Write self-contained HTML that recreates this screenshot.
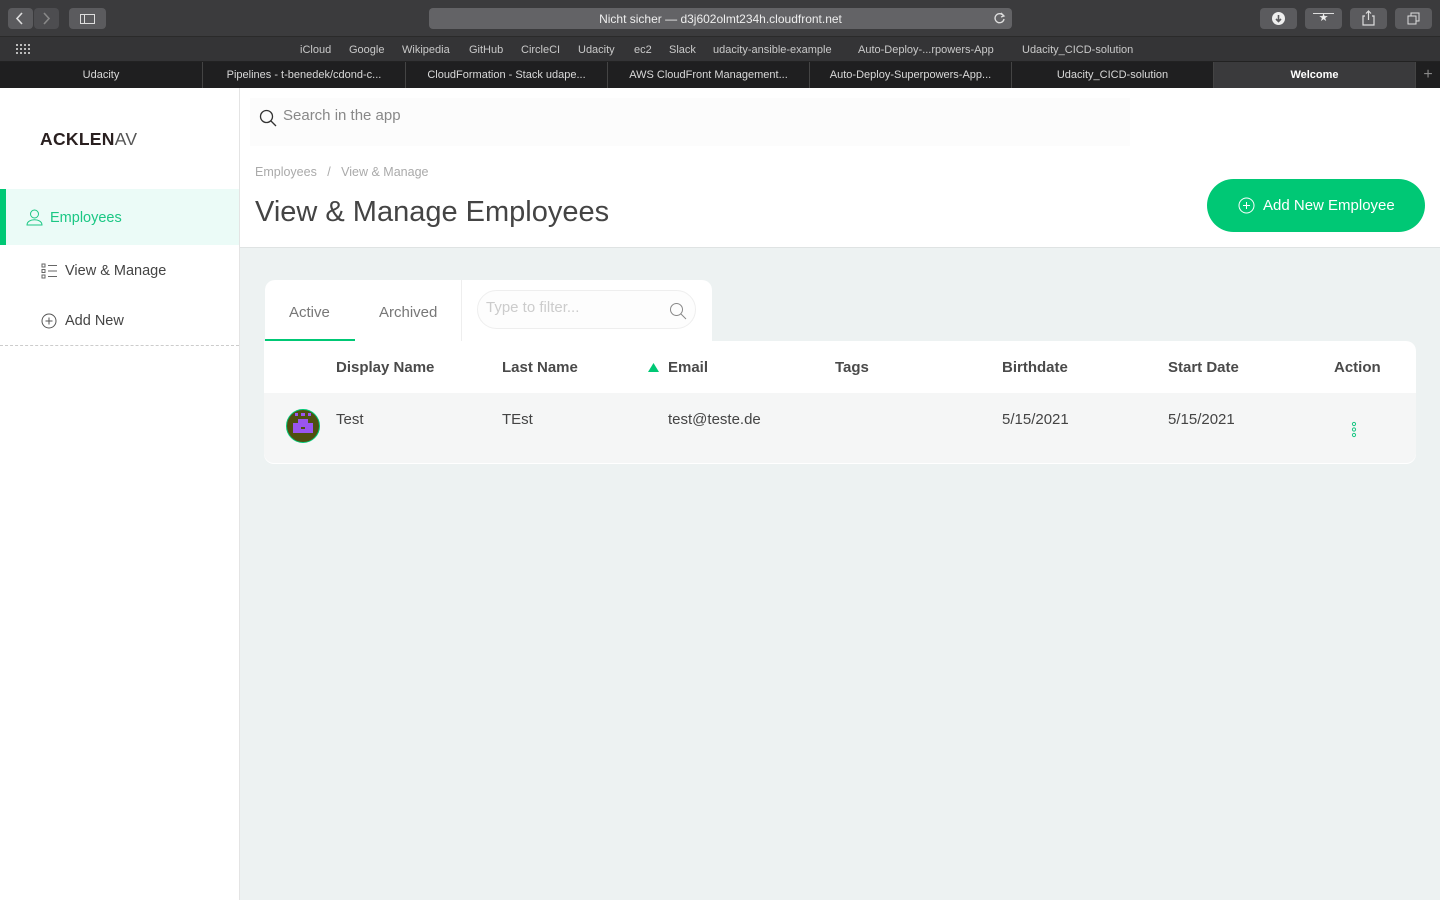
<!DOCTYPE html>
<html><head><meta charset="utf-8"><style>
*{box-sizing:border-box;margin:0;padding:0}
body{width:1440px;height:900px;overflow:hidden;font-family:"Liberation Sans",sans-serif;background:#edf2f2;position:relative}
.abs{position:absolute}
.tb{left:0;top:0;width:1440px;height:37px;background:#3b3b3d;border-bottom:1px solid #2a2a2a}
.btn{background:#5b5b5e;border-radius:4px;height:21px;top:8px}
.bm{left:0;top:37px;width:1440px;height:25px;background:#343436;border-bottom:1px solid #222;color:#c9c9c9;font-size:11px}
.bm span{position:absolute;top:7px}
.tabs{left:0;top:62px;width:1440px;height:26px;background:#1f1f20;color:#d9d9d9;font-size:11px}
.tab{position:absolute;top:0;height:26px;line-height:26px;text-align:center;border-right:1px solid #444;white-space:nowrap;overflow:hidden}
.side{left:0;top:88px;width:240px;height:812px;background:#fff;border-right:1px solid #e4e4e4}
.head{left:240px;top:88px;width:1200px;height:160px;background:#fff;border-bottom:1px solid #dfe3e3}
.f{font-family:"Liberation Sans",sans-serif}
.card{background:#fff}
.th{position:absolute;top:359px;font-weight:bold;font-size:15px;color:#4a4a4a}
.td{position:absolute;top:411px;font-size:15px;color:#444}
</style></head><body>
<div class="abs tb">
 <div class="abs btn" style="left:8px;width:25px"></div>
 <div class="abs btn" style="left:34px;width:25px;background:#4d4d50"></div>
 <svg class="abs" style="left:14px;top:12px" width="12" height="13"><path d="M8 1 L3 6.5 L8 12" stroke="#ddd" stroke-width="1.6" fill="none"/></svg>
 <svg class="abs" style="left:40px;top:12px" width="12" height="13"><path d="M4 1 L9 6.5 L4 12" stroke="#888" stroke-width="1.6" fill="none"/></svg>
 <div class="abs btn" style="left:69px;width:37px"></div>
 <div class="abs" style="left:80px;top:14px;width:15px;height:10px;border:1.3px solid #ddd"></div>
 <div class="abs" style="left:84px;top:14px;width:1px;height:10px;background:#ddd"></div>
 <div class="abs btn" style="left:429px;width:583px;background:#636366;color:#eee;font-size:12px;text-align:center;line-height:22px">Nicht sicher — d3j602olmt234h.cloudfront.net</div>
 <svg class="abs" style="left:993px;top:12px" width="13" height="13"><path d="M10.5 4 A4.5 4.5 0 1 0 11 7" stroke="#ddd" stroke-width="1.4" fill="none"/><path d="M8 1 L11 4 L8 5" stroke="#ddd" stroke-width="1.3" fill="none"/></svg>
 <div class="abs btn" style="left:1260px;width:37px"></div>
 <svg class="abs" style="left:1272px;top:12px" width="13" height="13"><circle cx="6.5" cy="6.5" r="6.5" fill="#eee"/><path d="M6.5 3V9M4 7L6.5 9.5L9 7" stroke="#5b5b5e" stroke-width="1.6" fill="none"/></svg>
 <div class="abs btn" style="left:1305px;width:37px;color:#eee;font-size:11px;text-align:center;line-height:21px">★</div>
 <div class="abs" style="left:1313px;top:13px;width:21px;height:1px;background:#ddd"></div>
 <div class="abs btn" style="left:1350px;width:37px"></div>
 <svg class="abs" style="left:1362px;top:10px" width="13" height="16"><path d="M3 6 H1 V15 H12 V6 H10 M6.5 10 V1 M4 3.5 L6.5 1 L9 3.5" stroke="#ddd" stroke-width="1.2" fill="none"/></svg>
 <div class="abs btn" style="left:1395px;width:37px"></div>
 <svg class="abs" style="left:1407px;top:12px" width="13" height="13"><rect x="1" y="4" width="8" height="8" stroke="#ddd" fill="none"/><path d="M4 4V1H12V9H9" stroke="#ddd" fill="none"/></svg>
</div>
<div class="abs bm">
 <svg class="abs" style="left:16px;top:7px" width="14" height="11" fill="#bbb"><rect x="0" y="0" width="2" height="2"/><rect x="4" y="0" width="2" height="2"/><rect x="8" y="0" width="2" height="2"/><rect x="12" y="0" width="2" height="2"/><rect x="0" y="4" width="2" height="2"/><rect x="4" y="4" width="2" height="2"/><rect x="8" y="4" width="2" height="2"/><rect x="12" y="4" width="2" height="2"/><rect x="0" y="8" width="2" height="2"/><rect x="4" y="8" width="2" height="2"/><rect x="8" y="8" width="2" height="2"/><rect x="12" y="8" width="2" height="2"/></svg>
 <span style="left:300px">iCloud</span><span style="left:349px">Google</span><span style="left:402px">Wikipedia</span><span style="left:469px">GitHub</span><span style="left:521px">CircleCI</span><span style="left:578px">Udacity</span><span style="left:634px">ec2</span><span style="left:669px">Slack</span><span style="left:713px">udacity-ansible-example</span><span style="left:858px">Auto-Deploy-...rpowers-App</span><span style="left:1022px">Udacity_CICD-solution</span>
</div>
<div class="abs tabs">
 <div class="tab" style="left:0;width:203px">Udacity</div>
 <div class="tab" style="left:203px;width:203px">Pipelines - t-benedek/cdond-c...</div>
 <div class="tab" style="left:406px;width:202px">CloudFormation - Stack udape...</div>
 <div class="tab" style="left:608px;width:202px">AWS CloudFront Management...</div>
 <div class="tab" style="left:810px;width:202px">Auto-Deploy-Superpowers-App...</div>
 <div class="tab" style="left:1012px;width:202px">Udacity_CICD-solution</div>
 <div class="tab" style="left:1214px;width:202px;background:#3a3a3c;color:#fff;font-weight:bold">Welcome</div>
 <div class="tab" style="left:1416px;width:24px;border:0;color:#888;font-size:16px">+</div>
</div>
<div class="abs side">
 <div class="abs" style="left:40px;top:41px;font-size:17.5px;font-weight:bold;color:#2a2020;letter-spacing:0.3px">ACKLEN<span style="font-weight:normal;color:#555">AV</span></div>
 <div class="abs" style="left:0;top:101px;width:239px;height:56px;background:#ebfbf7"></div>
 <div class="abs" style="left:0;top:101px;width:6px;height:56px;background:#00c875"></div>
 <svg class="abs" style="left:26px;top:121px" width="17" height="17"><circle cx="8.5" cy="5" r="4" stroke="#1bc784" fill="none"/><path d="M1 16 C1 9 16 9 16 16 Z" stroke="#1bc784" fill="none"/></svg>
 <div class="abs f" style="left:50px;top:122px;font-size:14.5px;color:#1bc784">Employees</div>
 <svg class="abs" style="left:41px;top:175px" width="17" height="16" stroke="#666" fill="none"><rect x="1" y="1" width="3" height="3"/><rect x="1" y="6.5" width="3" height="3"/><rect x="1" y="12" width="3" height="3"/><path d="M7 2.5H16M7 8H16M7 13.5H16"/></svg>
 <div class="abs f" style="left:65px;top:175px;font-size:14.5px;color:#444">View &amp; Manage</div>
 <svg class="abs" style="left:41px;top:225px" width="16" height="16" stroke="#555" fill="none"><circle cx="8" cy="8" r="7"/><path d="M8 4.5V11.5M4.5 8H11.5"/></svg>
 <div class="abs f" style="left:65px;top:225px;font-size:14.5px;color:#444">Add New</div>
 <div class="abs" style="left:0;top:257px;width:239px;border-top:1px dashed #ccc"></div>
</div>
<div class="abs head">
 <div class="abs" style="left:10px;top:10px;width:880px;height:48px;background:#fcfcfc"></div>
 <svg class="abs" style="left:19px;top:21px" width="18" height="18" stroke="#333" fill="none" stroke-width="1.3"><circle cx="7.5" cy="7.5" r="6"/><path d="M12 12L17 17"/></svg>
 <div class="abs f" style="left:43px;top:19px;font-size:15px;color:#888">Search in the app</div>
 <div class="abs f" style="left:15px;top:77px;font-size:12.5px;color:#aaa">Employees &nbsp;&nbsp;/&nbsp;&nbsp; View &amp; Manage</div>
 <div class="abs f" style="left:15px;top:108px;font-size:29px;color:#444">View &amp; Manage Employees</div>
 <div class="abs" style="left:967px;top:91px;width:218px;height:53px;border-radius:27px;background:#00c875"></div>
 <svg class="abs" style="left:998px;top:109px" width="17" height="17" stroke="#fff" fill="none"><circle cx="8.5" cy="8.5" r="7.5"/><path d="M8.5 5V12M5 8.5H12"/></svg>
 <div class="abs f" style="left:1023px;top:109px;font-size:15px;color:#fff">Add New Employee</div>
</div>
<div class="abs card" style="left:265px;top:280px;width:447px;height:62px;border-radius:10px 10px 0 0"></div>
<div class="abs" style="left:461px;top:280px;width:1px;height:61px;background:#eee"></div>
<div class="abs f" style="left:289px;top:304px;font-size:15px;color:#777">Active</div>
<div class="abs f" style="left:379px;top:304px;font-size:15px;color:#777">Archived</div>
<div class="abs" style="left:265px;top:339px;width:90px;height:2px;background:#00c875"></div>
<div class="abs" style="left:477px;top:290px;width:219px;height:39px;border:1px solid #eee;border-radius:20px;background:#fdfdfd"></div>
<div class="abs f" style="left:486px;top:299px;font-size:15px;color:#ccc">Type to filter...</div>
<svg class="abs" style="left:669px;top:302px" width="18" height="18" stroke="#888" fill="none"><circle cx="7.5" cy="7.5" r="6"/><path d="M12 12L17 17"/></svg>
<div class="abs card" style="left:264px;top:341px;width:1152px;height:123px;border-radius:0 10px 10px 10px"></div>
<div class="abs" style="left:264px;top:393px;width:1152px;height:70px;background:#f5f6f6;border-radius:0 0 10px 10px"></div>
<div class="th f" style="left:336px">Display Name</div>
<div class="th f" style="left:502px">Last Name</div>
<svg class="abs" style="left:648px;top:363px" width="11" height="9"><path d="M0 9L5.5 0L11 9Z" fill="#00c875"/></svg>
<div class="th f" style="left:668px">Email</div>
<div class="th f" style="left:835px">Tags</div>
<div class="th f" style="left:1002px">Birthdate</div>
<div class="th f" style="left:1168px">Start Date</div>
<div class="th f" style="left:1334px">Action</div>
<svg class="abs" style="left:286px;top:409px" width="34" height="34"><circle cx="17" cy="17" r="16.5" fill="#4f4f10" stroke="#00c875"/><rect x="7" y="14" width="20" height="10" fill="#9a55f0"/><rect x="12" y="10" width="10" height="5" fill="#9a55f0"/><rect x="9" y="4" width="3" height="3" fill="#9a55f0"/><rect x="15" y="4" width="4" height="3" fill="#9a55f0"/><rect x="22" y="4" width="3" height="3" fill="#9a55f0"/><rect x="15" y="18" width="4" height="2" fill="#4f4f10"/></svg>
<div class="td f" style="left:336px">Test</div>
<div class="td f" style="left:502px">TEst</div>
<div class="td f" style="left:668px">test@teste.de</div>
<div class="td f" style="left:1002px">5/15/2021</div>
<div class="td f" style="left:1168px">5/15/2021</div>
<svg class="abs" style="left:1350px;top:421px" width="8" height="18" stroke="#1bc784" fill="none"><circle cx="4" cy="3" r="1.6"/><circle cx="4" cy="8.5" r="1.6"/><circle cx="4" cy="14" r="1.6"/></svg>
</body></html>
